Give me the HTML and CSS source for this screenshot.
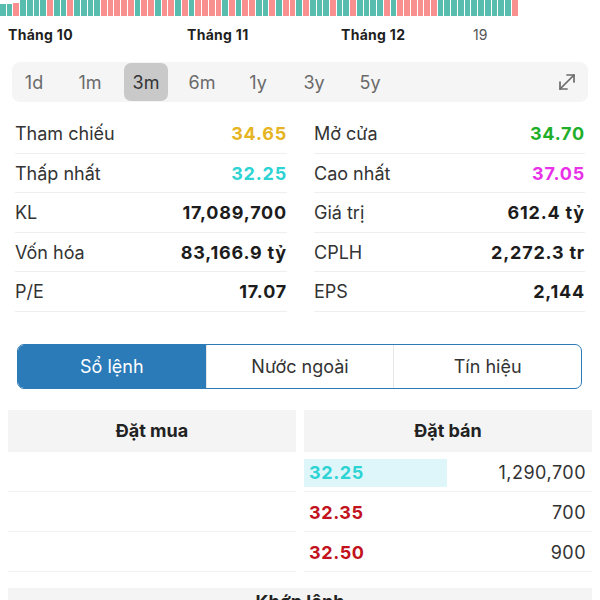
FILE: index.html
```html
<!DOCTYPE html>
<html lang="vi">
<head>
<meta charset="utf-8">
<link rel="stylesheet" href="styles.css">
</head>
<body>
<div class="vol">
<i class="b t" style="height:12px"></i><i class="b t" style="height:12px"></i><i class="b r" style="height:13px"></i><i class="b t"></i><i class="b t"></i><i class="b t"></i><i class="b t"></i><i class="b r"></i><i class="b t"></i><i class="b t"></i><i class="b r"></i><i class="b t"></i><i class="b t"></i><i class="b t"></i><i class="b t"></i><i class="b r"></i><i class="b r"></i><i class="b r"></i><i class="b r"></i><i class="b r"></i><i class="b t"></i><i class="b r"></i><i class="b r"></i><i class="b t"></i><i class="b r"></i><i class="b r"></i><i class="b t"></i>
<i class="b r"></i><i class="b t"></i><i class="b r"></i><i class="b r"></i><i class="b r"></i><i class="b r"></i><i class="b t"></i><i class="b r"></i><i class="b t"></i><i class="b r"></i><i class="b r"></i><i class="b t"></i><i class="b t"></i><i class="b r"></i><i class="b t"></i><i class="b r"></i><i class="b r"></i><i class="b t"></i><i class="b r"></i><i class="b t"></i><i class="b t"></i><i class="b t"></i><i class="b r"></i><i class="b t"></i><i class="b t"></i>
<i class="b r"></i><i class="b t"></i><i class="b t"></i><i class="b t"></i><i class="b t"></i><i class="b r"></i><i class="b t"></i><i class="b r"></i><i class="b r"></i><i class="b r"></i><i class="b r"></i><i class="b r"></i><i class="b r"></i><i class="b t"></i><i class="b t"></i><i class="b t"></i><i class="b t"></i><i class="b t"></i><i class="b t"></i><i class="b t"></i><i class="b t"></i><i class="b t"></i><i class="b t"></i><i class="b t"></i><i class="b r"></i>
</div>
<div class="axis">
  <span class="month">Tháng 10</span>
  <span class="month">Tháng 11</span>
  <span class="month">Tháng 12</span>
  <span class="day">19</span>
</div>
<div class="range">
  <span class="opt">1d</span>
  <span class="opt">1m</span>
  <span class="opt sel">3m</span>
  <span class="opt">6m</span>
  <span class="opt">1y</span>
  <span class="opt">3y</span>
  <span class="opt">5y</span>
  <svg class="expand" width="22" height="22" viewBox="0 0 22 22" fill="none" stroke="#6b6b6b" stroke-width="1.7" stroke-linecap="round" stroke-linejoin="round">
    <path d="M4 18L18 4"/>
    <path d="M11 4h7v7"/>
    <path d="M4 11v7h7"/>
  </svg>
</div>
<div class="stats">
  <div class="col">
    <div class="row"><span class="lbl">Tham chiếu</span><span class="val gold">34.65</span></div>
    <div class="row"><span class="lbl">Thấp nhất</span><span class="val cyan">32.25</span></div>
    <div class="row"><span class="lbl">KL</span><span class="val">17,089,700</span></div>
    <div class="row"><span class="lbl">Vốn hóa</span><span class="val">83,166.9 tỷ</span></div>
    <div class="row"><span class="lbl">P/E</span><span class="val">17.07</span></div>
  </div>
  <div class="col">
    <div class="row"><span class="lbl">Mở cửa</span><span class="val green">34.70</span></div>
    <div class="row"><span class="lbl">Cao nhất</span><span class="val pink">37.05</span></div>
    <div class="row"><span class="lbl">Giá trị</span><span class="val">612.4 tỷ</span></div>
    <div class="row"><span class="lbl">CPLH</span><span class="val">2,272.3 tr</span></div>
    <div class="row"><span class="lbl">EPS</span><span class="val">2,144</span></div>
  </div>
</div>
<div class="tabs">
  <div class="tab active">Sổ lệnh</div>
  <div class="tab">Nước ngoài</div>
  <div class="tab">Tín hiệu</div>
</div>
<div class="book">
  <div class="side">
    <div class="head">Đặt mua</div>
    <div class="orow"></div>
    <div class="orow"></div>
    <div class="orow"></div>
  </div>
  <div class="side">
    <div class="head">Đặt bán</div>
    <div class="orow"><span class="price cyan hl">32.25</span><span class="qty">1,290,700</span></div>
    <div class="orow"><span class="price red">32.35</span><span class="qty">700</span></div>
    <div class="orow"><span class="price red">32.50</span><span class="qty">900</span></div>
  </div>
</div>
<div class="match">Khớp lệnh</div>
</body>
</html>
```
FILE: styles.css
```css
* { box-sizing: border-box; }
html, body { margin: 0; padding: 0; background: #fff; }
body {
  font-family: Inter, "Noto Sans", "DejaVu Sans", sans-serif;
  color: #2b2b2b;
  width: 600px;
  overflow: hidden;
}
.vol {
  display: flex;
  align-items: flex-end;
  gap: 1px;
  width: 518px;
  height: 16px;
}
.b { display: block; flex: 1; height: 16px; }
.b.t { background: #58bcae; }
.b.r { background: #f89090; }

.axis {
  display: grid;
  grid-template-columns: 179px 154px 132px auto;
  align-items: center;
  height: 34px;
  padding: 2px 0 0 8px;
}
.month { font-size: 14px; font-weight: 700; color: #1f1f1f; letter-spacing: 0.3px; }
.day { font-size: 14px; color: #555; }

.range {
  display: flex;
  align-items: center;
  gap: 12px;
  margin: 12px 12px 0 12px;
  height: 40px;
  padding-right: 10px;
  background: #f5f5f5;
  border-radius: 8px;
}
.opt {
  width: 44px;
  height: 38px;
  display: flex;
  align-items: center;
  justify-content: center;
  font-size: 18px;
  color: #6a6a6a;
  border-radius: 7px;
}
.opt.sel { background: #c9c9c9; color: #333; }
.expand { margin-left: auto; }

.stats {
  display: grid;
  grid-template-columns: 272px 271px;
  column-gap: 27px;
  padding: 0 15px;
  margin-top: 12px;
}
.row {
  display: flex;
  justify-content: space-between;
  align-items: center;
  height: 39.5px;
  padding-top: 1px;
  border-bottom: 1px solid #efefef;
  font-size: 18px;
}
.lbl { color: #333; }
.val { font-weight: 700; color: #1c1c1c; letter-spacing: 0.8px; }
.gold { color: #e6b422; }
.cyan { color: #2ed3d3; }
.green { color: #1fae2a; }
.pink { color: #e831e8; }
.red { color: #c2121b; }

.tabs {
  display: grid;
  grid-template-columns: 1fr 1fr 1fr;
  margin: 32px 18px 0 17px;
  height: 45px;
  border: 1.5px solid #2b7bb9;
  border-radius: 7px;
  overflow: hidden;
}
.tab {
  display: flex;
  align-items: center;
  justify-content: center;
  font-size: 18px;
  color: #333;
  border-left: 1px solid #e6e6e6;
  padding-top: 1px;
}
.tab:first-child { border-left: none; }
.tab.active { background: #2b7bb9; color: #fff; }

.book {
  display: grid;
  grid-template-columns: 1fr 1fr;
  column-gap: 8px;
  padding: 0 8px;
  margin-top: 21px;
}
.head {
  height: 42px;
  display: flex;
  align-items: center;
  justify-content: center;
  background: #f4f4f4;
  font-size: 18px;
  font-weight: 700;
  color: #222;
}
.orow {
  display: flex;
  justify-content: space-between;
  align-items: center;
  height: 40px;
  padding-top: 3px;
  border-bottom: 1px solid #f1f1f1;
  font-size: 18px;
}
.price {
  font-weight: 700;
  padding-left: 5px;
  width: 143px;
  height: 28px;
  display: flex;
  align-items: center;
  letter-spacing: 0.6px;
}
.price.hl { background: #def6fa; }
.qty { color: #333; padding-right: 6px; letter-spacing: 0.5px; }

.match {
  margin: 16px 8px 0;
  height: 42px;
  padding-top: 3px;
  display: flex;
  align-items: flex-start;
  justify-content: center;
  background: #f4f4f4;
  font-size: 18px;
  font-weight: 700;
  color: #222;
}
```
